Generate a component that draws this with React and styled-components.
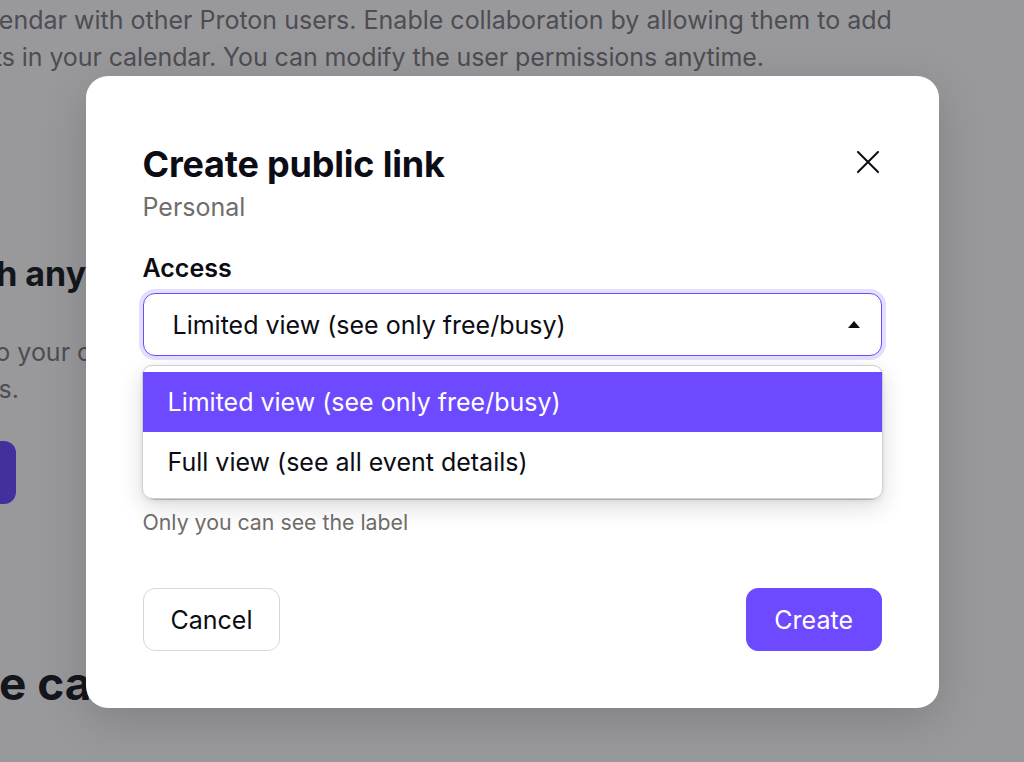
import React from 'react';
import styled, { createGlobalStyle } from 'styled-components';

const Global = createGlobalStyle`
  html, body { margin: 0; padding: 0; background: #fff; }
  body { font-family: Inter, "Noto Sans", sans-serif; color: #0c0c14; overflow: hidden; }
  * { box-sizing: border-box; }
`;

const Screen = styled.div`
  position: relative;
  width: 1024px;
  height: 762px;
  overflow: hidden;
  background: #fff;
`;

const Settings = styled.div`
  display: flex;
  flex-direction: column;
  align-items: flex-start;
  padding-top: 2px;
`;

const BodyText = styled.p`
  margin: ${(p) => p.$top || 0}px 0 0 -${(p) => p.$shift}px;
  font-size: 25px;
  line-height: 37px;
  color: #7c7c82;
  white-space: nowrap;
  letter-spacing: ${(p) => p.$tight || 0}px;
`;

const SectionTitle = styled.h2`
  margin: ${(p) => p.$top || 0}px 0 0 -${(p) => p.$shift}px;
  font-size: ${(p) => p.$size}px;
  font-weight: 700;
  line-height: 1.2;
  color: #1d1d24;
  white-space: nowrap;
`;

const PageButton = styled.button`
  margin: ${(p) => p.$top}px 0 0 -${(p) => p.$shift}px;
  width: 190px;
  height: 63px;
  border: none;
  border-radius: 12px;
  background: #6d4aff;
  color: #fff;
  font: inherit;
  font-size: 25px;
`;

const Backdrop = styled.div`
  position: absolute;
  inset: 0;
  background: rgba(12, 12, 20, 0.42);
  display: flex;
  justify-content: center;
  align-items: flex-start;
  padding-top: 76px;
`;

const Modal = styled.div`
  width: 853px;
  height: 632px;
  background: #fff;
  border-radius: 22px;
  box-shadow: 0 12px 48px rgba(0, 0, 0, 0.16);
  padding: 66px 57px 57px;
  display: flex;
  flex-direction: column;
`;

const Header = styled.div`
  display: flex;
  justify-content: space-between;
  align-items: flex-start;
`;

const TitleBlock = styled.div`
  display: flex;
  flex-direction: column;
`;

const Title = styled.h1`
  margin: 0;
  font-size: 36px;
  line-height: 44px;
  font-weight: 700;
  color: #0c0c14;
  letter-spacing: -0.2px;
`;

const Subtitle = styled.div`
  margin-top: 5px;
  font-size: 25px;
  line-height: 32px;
  color: #706d6b;
`;

const CloseButton = styled.button`
  width: 28px;
  height: 28px;
  margin-top: 6px;
  padding: 0;
  border: none;
  background: none;
  display: flex;
  align-items: center;
  justify-content: center;
  color: #0c0c14;
`;

const Field = styled.div`
  margin-top: ${(p) => p.$top}px;
  display: flex;
  flex-direction: column;
`;

const FieldLabel = styled.label`
  font-size: 25px;
  line-height: 30px;
  font-weight: 600;
  color: #0c0c14;
  margin-bottom: 10px;
`;

const SelectWrap = styled.div`
  position: relative;
`;

const SelectBox = styled.div`
  height: 63px;
  border: 1.5px solid #6d4aff;
  border-radius: 12px;
  box-shadow: 0 0 0 4px rgba(109, 74, 255, 0.18);
  display: flex;
  align-items: center;
  justify-content: space-between;
  padding: 0 20px 0 29px;
  font-size: 25px;
  color: #0c0c14;
  background: #fff;
`;

const Menu = styled.ul`
  position: absolute;
  top: calc(100% + 9px);
  left: -1px;
  right: -1px;
  margin: 0;
  padding: 6px 0;
  list-style: none;
  background: #fff;
  border: 1px solid #cfcfd2;
  border-radius: 10px;
  box-shadow: 0 8px 24px rgba(0, 0, 0, 0.14), 0 2px 4px rgba(0, 0, 0, 0.08);
  z-index: 2;
`;

const MenuItem = styled.li`
  height: 60px;
  display: flex;
  align-items: center;
  padding: 0 25px;
  font-size: 25px;
  color: ${(p) => (p.$active ? '#fff' : '#0c0c14')};
  background: ${(p) => (p.$active ? '#6d4aff' : 'transparent')};
`;

const Input = styled.div`
  height: 63px;
  border: 1px solid #d1cfcd;
  border-radius: 12px;
`;

const Hint = styled.div`
  margin-top: 8px;
  font-size: 21.3px;
  line-height: 28px;
  color: #706d6b;
`;

const Footer = styled.div`
  margin-top: auto;
  display: flex;
  justify-content: space-between;
`;

const Button = styled.button`
  height: 63px;
  padding: 0 ${(p) => (p.$primary ? 27.5 : 27)}px;
  border-radius: 12px;
  border: 1px solid ${(p) => (p.$primary ? '#6d4aff' : '#d9d7d5')};
  background: ${(p) => (p.$primary ? '#6d4aff' : '#fff')};
  color: ${(p) => (p.$primary ? '#fff' : '#0c0c14')};
  font-family: inherit;
  font-size: 25px;
`;

function CloseIcon() {
  return (
    <svg width="22" height="22" viewBox="0 0 22 22" fill="none">
      <path d="M1 1L21 21M21 1L1 21" stroke="currentColor" strokeWidth="2" strokeLinecap="round" />
    </svg>
  );
}

function CaretUp() {
  return (
    <svg width="14" height="9" viewBox="0 0 14 9">
      <path d="M7 1L13 8H1Z" fill="#0c0c14" />
    </svg>
  );
}

export default function App() {
  return (
    <>
      <Global />
      <Screen>
        <Settings>
          <BodyText $shift={171}>
            Share your calendar with other Proton users. Enable collaboration by allowing them to add
          </BodyText>
          <BodyText $shift={164} $tight={-0.1}>
            and edit events in your calendar. You can modify the user permissions anytime.
          </BodyText>
          <SectionTitle $size={34} $shift={159} $top={178}>Share with anyone</SectionTitle>
          <BodyText $shift={167} $top={39}>
            Create a link to your calendar and share it with anyone outside Proton. Only you can add
          </BodyText>
          <BodyText $shift={193}>or remove events.</BodyText>
          <PageButton $shift={174} $top={33}>Create link</PageButton>
          <SectionTitle $size={46} $shift={118} $top={152}>Delete calendar</SectionTitle>
        </Settings>
        <Backdrop>
          <Modal>
            <Header>
              <TitleBlock>
                <Title>Create public link</Title>
                <Subtitle>Personal</Subtitle>
              </TitleBlock>
              <CloseButton aria-label="Close">
                <CloseIcon />
              </CloseButton>
            </Header>
            <Field $top={30}>
              <FieldLabel>Access</FieldLabel>
              <SelectWrap>
                <SelectBox>
                  <span>Limited view (see only free/busy)</span>
                  <CaretUp />
                </SelectBox>
                <Menu>
                  <MenuItem $active>Limited view (see only free/busy)</MenuItem>
                  <MenuItem>Full view (see all event details)</MenuItem>
                </Menu>
              </SelectWrap>
            </Field>
            <Field $top={41}>
              <FieldLabel>Label (optional)</FieldLabel>
              <Input />
              <Hint>Only you can see the label</Hint>
            </Field>
            <Footer>
              <Button>Cancel</Button>
              <Button $primary>Create</Button>
            </Footer>
          </Modal>
        </Backdrop>
      </Screen>
    </>
  );
}
